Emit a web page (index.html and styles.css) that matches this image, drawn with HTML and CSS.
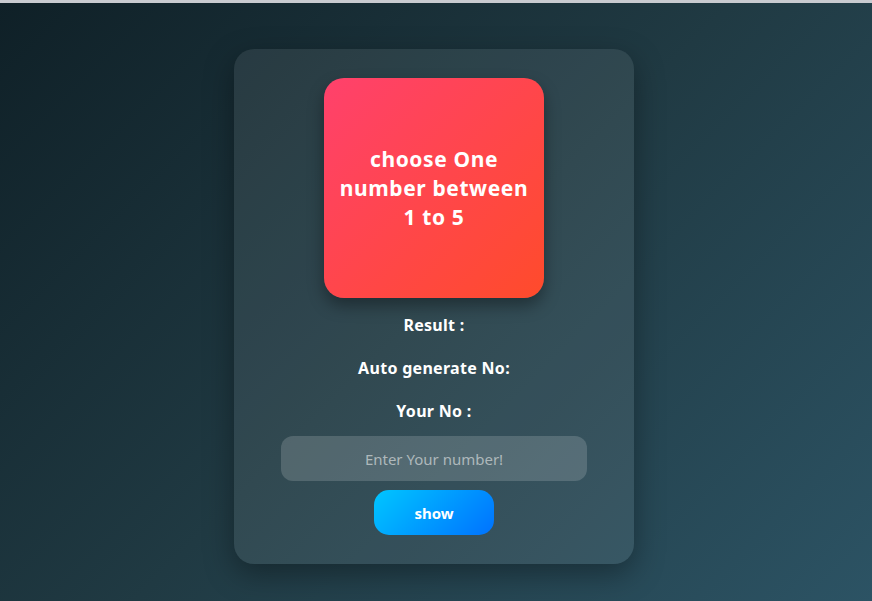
FILE: index.html
```html
<!DOCTYPE html>
<html lang="en">
<head>
<meta charset="UTF-8">
<title>Guess the Number</title>
<link rel="stylesheet" href="styles.css">
</head>
<body>
  <div class="topline"></div>
  <main class="page">
    <section class="card">
      <div class="tile">
        <h2 class="tile-text">choose One number between 1 to 5</h2>
      </div>
      <p class="info first">Result :</p>
      <p class="info">Auto generate No:</p>
      <p class="info">Your No :</p>
      <input class="guess" type="text" placeholder="Enter Your number!">
      <button class="show-btn" type="button">show</button>
    </section>
  </main>
</body>
</html>
```

FILE: styles.css
```css
* { box-sizing: border-box; }

html, body {
  margin: 0;
  height: 100%;
}

body {
  font-family: "Noto Sans", "Open Sans", sans-serif;
  background: linear-gradient(135deg, #0f2027 0%, #203a43 50%, #2c5364 100%);
  color: #fff;
  overflow: hidden;
}

.topline {
  height: 3px;
  background: #c9cbd0;
}

.page {
  display: flex;
  justify-content: center;
  padding: 46px 4px 0 0;
}

.card {
  width: 400px;
  padding: 29px 0 29px;
  border-radius: 20px;
  background: rgba(255, 255, 255, 0.08);
  box-shadow: 0 10px 30px rgba(0, 0, 0, 0.35);
  display: flex;
  flex-direction: column;
  align-items: center;
}

.tile {
  width: 220px;
  height: 220px;
  border-radius: 20px;
  background: linear-gradient(135deg, #ff416c, #ff4b2b);
  box-shadow: 0 8px 16px rgba(0, 0, 0, 0.35);
  display: flex;
  align-items: center;
  justify-content: center;
  padding: 0 14px;
}

.tile-text {
  margin: 0;
  font-size: 21px;
  line-height: 29px;
  font-weight: 700;
  text-align: center;
  letter-spacing: 0.6px;
}

.info {
  margin: 21px 0 0;
  font-size: 16px;
  line-height: 22px;
  font-weight: 700;
  letter-spacing: 0.3px;
}

.info.first { margin-top: 16px; }

.guess {
  margin-top: 14px;
  width: 306px;
  height: 45px;
  border: none;
  border-radius: 12px;
  background: rgba(255, 255, 255, 0.16);
  color: #fff;
  font-family: inherit;
  font-size: 15px;
  text-align: center;
  outline: none;
}

.guess::placeholder { color: #aeb8bb; }

.show-btn {
  margin-top: 9px;
  width: 120px;
  height: 45px;
  border: none;
  border-radius: 15px;
  background: linear-gradient(135deg, #00c6ff, #0072ff);
  color: #fff;
  font-family: inherit;
  font-size: 15px;
  font-weight: 700;
  cursor: pointer;
}
```
